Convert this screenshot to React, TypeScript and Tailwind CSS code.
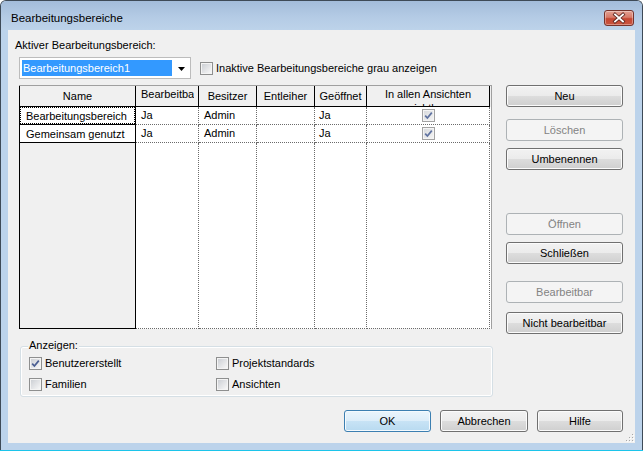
import React from "react";

function CheckBox({ checked, dim }: { checked?: boolean; dim?: boolean }) {
  return (
    <span
      className={`relative block w-[13px] h-[13px] shrink-0 border p-[1px] bg-[#f4f4f4] ${
        dim ? "border-[#a3a3a3]" : "border-[#8e8f8f]"
      }`}
    >
      <span
        className={`block w-full h-full ${
          dim
            ? "bg-[linear-gradient(135deg,#d9dbde,#f3f3f3)]"
            : "bg-[linear-gradient(135deg,#cdd0d5,#f7f7f7)]"
        }`}
      />
      {checked && (
        <svg
          className="absolute left-0 top-0"
          width="11"
          height="11"
          viewBox="0 0 11 11"
        >
          <path
            d="M2.2 5.6 L4.4 8 L8.8 2.6"
            fill="none"
            stroke={dim ? "#5f72a0" : "#4a5e92"}
            strokeWidth="1.7"
          />
        </svg>
      )}
    </span>
  );
}

function Button({
  label,
  disabled,
  primary,
  className = "",
}: {
  label: string;
  disabled?: boolean;
  primary?: boolean;
  className?: string;
}) {
  let look =
    "border-[#707070] text-black bg-[linear-gradient(to_bottom,#f2f2f2_0%,#ebebeb_50%,#dddddd_50%,#cfcfcf_100%)] shadow-[inset_0_0_0_1px_#fbfbfb]";
  if (disabled) look = "border-[#adb2b5] text-[#838383] bg-[#f4f4f4]";
  if (primary)
    look =
      "border-[#3c7fb1] text-black bg-[linear-gradient(to_bottom,#eaf5fc_0%,#dcedf9_50%,#c8e3f5_50%,#b8daf0_100%)] shadow-[inset_0_0_0_1px_#f4fafe]";
  return (
    <div
      className={`flex items-center justify-center h-[22px] border rounded-[3px] text-[11px] ${look} ${className}`}
    >
      {label}
    </div>
  );
}

function Grip() {
  const dots = [
    [9, 3],
    [6, 6],
    [9, 6],
    [3, 9],
    [6, 9],
    [9, 9],
  ];
  return (
    <svg className="absolute right-0 bottom-0" width="12" height="12">
      {dots.map(([x, y]) => (
        <g key={`${x}-${y}`}>
          <rect x={x + 1} y={y + 1} width="1" height="1" fill="#ffffff" />
          <rect x={x} y={y} width="1" height="1" fill="#a8a8a8" />
        </g>
      ))}
    </svg>
  );
}

const rows = [
  { name: "Bearbeitungsbereich", focus: true },
  { name: "Gemeinsam genutzt", focus: false },
];

function Grid() {
  return (
    <div className="w-[473px] h-[244px] flex flex-col border-t border-r border-[#a0a0a0] bg-white">
      {/* header */}
      <div className="flex h-[21px] bg-[#f0f0f0] shrink-0">
        <div className="w-[117px] flex items-center justify-center border-l border-r border-b border-black">
          Name
        </div>
        <div className="w-[63px] pl-[5px] pt-[1px] leading-[14px] border-r border-b border-black">
          <div className="w-[53px] overflow-hidden whitespace-nowrap">
            Bearbeitbar
          </div>
        </div>
        <div className="w-[58px] flex items-center justify-center border-r border-b border-black">
          Besitzer
        </div>
        <div className="w-[58px] flex items-center justify-center border-r border-b border-black">
          Entleiher
        </div>
        <div className="w-[52px] flex items-center justify-center border-r border-b border-black whitespace-nowrap">
          Geöffnet
        </div>
        <div className="w-[123px] overflow-hidden pt-[1px] leading-[14px] text-center border-r border-b border-black">
          In allen Ansichten sichtbar
        </div>
        <div className="flex-1" />
      </div>

      {/* rows */}
      {rows.map((r) => (
        <div key={r.name} className="flex h-[18px] leading-[17px] shrink-0">
          <div className="w-[117px] border-l border-r border-b border-black bg-white">
            <div
              className={`h-full pl-[5px] whitespace-nowrap overflow-hidden border border-dotted ${
                r.focus ? "border-black" : "border-transparent"
              }`}
            >
              {r.name}
            </div>
          </div>
          <div className="w-[63px] pl-[5px] border-r border-b border-dotted border-[#6a6a6a]">
            Ja
          </div>
          <div className="w-[58px] pl-[5px] border-r border-b border-dotted border-[#6a6a6a]">
            Admin
          </div>
          <div className="w-[58px] border-r border-b border-dotted border-[#6a6a6a]" />
          <div className="w-[52px] pl-[4px] border-r border-b border-dotted border-[#6a6a6a]">
            Ja
          </div>
          <div className="w-[123px] flex items-center justify-center border-r border-b border-dotted border-[#6a6a6a]">
            <CheckBox checked dim />
          </div>
          <div className="flex-1" />
        </div>
      ))}

      {/* empty area */}
      <div className="flex flex-1">
        <div className="w-[117px] border-l border-r border-b border-black bg-[#f0f0f0]" />
        <div className="w-[63px] border-r border-b border-dotted border-[#6a6a6a]" />
        <div className="w-[58px] border-r border-b border-dotted border-[#6a6a6a]" />
        <div className="w-[58px] border-r border-b border-dotted border-[#6a6a6a]" />
        <div className="w-[52px] border-r border-b border-dotted border-[#6a6a6a]" />
        <div className="w-[123px] border-r border-b border-dotted border-[#6a6a6a]" />
        <div className="flex-1" />
      </div>
    </div>
  );
}

export default function App() {
  return (
    <div className="w-[643px] h-[451px] flex flex-col font-['Liberation_Sans',Arial,sans-serif] text-[11px] text-black overflow-hidden">
      <div className="flex-1 flex flex-col border-x border-t border-[#3e4a57] rounded-t-[6px] bg-[#bcd3eb]">
        {/* title bar */}
        <div className="h-[29px] shrink-0 flex items-start justify-between pt-[9px] pl-[10px] pr-[8px] rounded-t-[5px] bg-[linear-gradient(to_bottom,#a3bcda,#b4cbe5_55%,#bdd3ea)]">
          <span className="leading-[16px] text-[11.5px]">Bearbeitungsbereiche</span>
          <div className="w-[30px] h-[16px] rounded-[3px] border border-[#76332b] bg-[linear-gradient(to_bottom,#e3a193_0%,#d77a69_45%,#c54733_55%,#c9553f_100%)] shadow-[inset_0_0_0_1px_rgba(255,255,255,0.35)]">
            <svg width="28" height="14" viewBox="0 0 28 14">
              <path
                d="M10 3.5 L18 10.5 M18 3.5 L10 10.5"
                stroke="#5a2620"
                strokeWidth="3.4"
                strokeLinecap="square"
              />
              <path
                d="M10 3.5 L18 10.5 M18 3.5 L10 10.5"
                stroke="#ffffff"
                strokeWidth="1.8"
                strokeLinecap="square"
              />
            </svg>
          </div>
        </div>

        {/* client */}
        <div className="flex-1 flex px-[7px] pb-[7px]">
          <div className="relative flex-1 flex flex-col bg-[#f0f0f0]">
            <div className="pl-[7px] pt-[8px] h-[23px] leading-[15px]">
              Aktiver Bearbeitungsbereich:
            </div>

            <div className="mt-[4px] ml-[11px] flex items-center h-[22px]">
              <div className="relative w-[172px] h-[22px] border border-[#bcbcbc] bg-white">
                <div className="absolute left-[2px] top-[2px] w-[150px] h-[16px] bg-[#3399ff] text-white leading-[16px] pl-[1px]">
                  Bearbeitungsbereich1
                </div>
                <svg
                  className="absolute left-[158px] top-[9px]"
                  width="7"
                  height="4"
                  viewBox="0 0 7 4"
                >
                  <path d="M0 0 H7 L3.5 4 Z" fill="#000" />
                </svg>
              </div>
              <div className="ml-[9px] flex items-center">
                <CheckBox />
                <span className="ml-[3px]">
                  Inaktive Bearbeitungsbereiche grau anzeigen
                </span>
              </div>
            </div>

            <div className="mt-[6px] ml-[11px] flex items-start h-[248px]">
              <Grid />
              <div className="ml-[14px] w-[117px] flex flex-col">
                <Button label="Neu" />
                <Button label="Löschen" disabled className="mt-[12px]" />
                <Button label="Umbenennen" className="mt-[7px]" />
                <Button label="Öffnen" disabled className="mt-[43px]" />
                <Button label="Schließen" className="mt-[7px]" />
                <Button label="Bearbeitbar" disabled className="mt-[17px]" />
                <Button label="Nicht bearbeitbar" className="mt-[9px]" />
              </div>
            </div>

            <div className="relative mt-[13px] ml-[12px] w-[473px] h-[51px] border border-[#d5dfe5] rounded-[3px] shadow-[inset_0_0_0_1px_#ffffff]">
              <span className="absolute left-[7px] top-[-8px] px-[1px] leading-[13px] bg-[#f0f0f0]">
                Anzeigen:
              </span>
              <div className="grid grid-cols-[187px_1fr] auto-rows-[13px] gap-y-[8px] pl-[8px] pt-[10px] leading-[13px]">
                <div className="flex items-center">
                  <CheckBox checked />
                  <span className="ml-[3px]">Benutzererstellt</span>
                </div>
                <div className="flex items-center">
                  <CheckBox />
                  <span className="ml-[3px]">Projektstandards</span>
                </div>
                <div className="flex items-center">
                  <CheckBox />
                  <span className="ml-[3px]">Familien</span>
                </div>
                <div className="flex items-center">
                  <CheckBox />
                  <span className="ml-[3px]">Ansichten</span>
                </div>
              </div>
            </div>

            <div className="mt-[13px] flex justify-end gap-[9px] pr-[12px]">
              <Button label="OK" primary className="w-[87px]" />
              <Button label="Abbrechen" className="w-[88px]" />
              <Button label="Hilfe" className="w-[86px]" />
            </div>

            <Grip />
          </div>
        </div>
      </div>
      <div className="h-[1px] bg-[#1cc4ea] shrink-0" />
    </div>
  );
}
